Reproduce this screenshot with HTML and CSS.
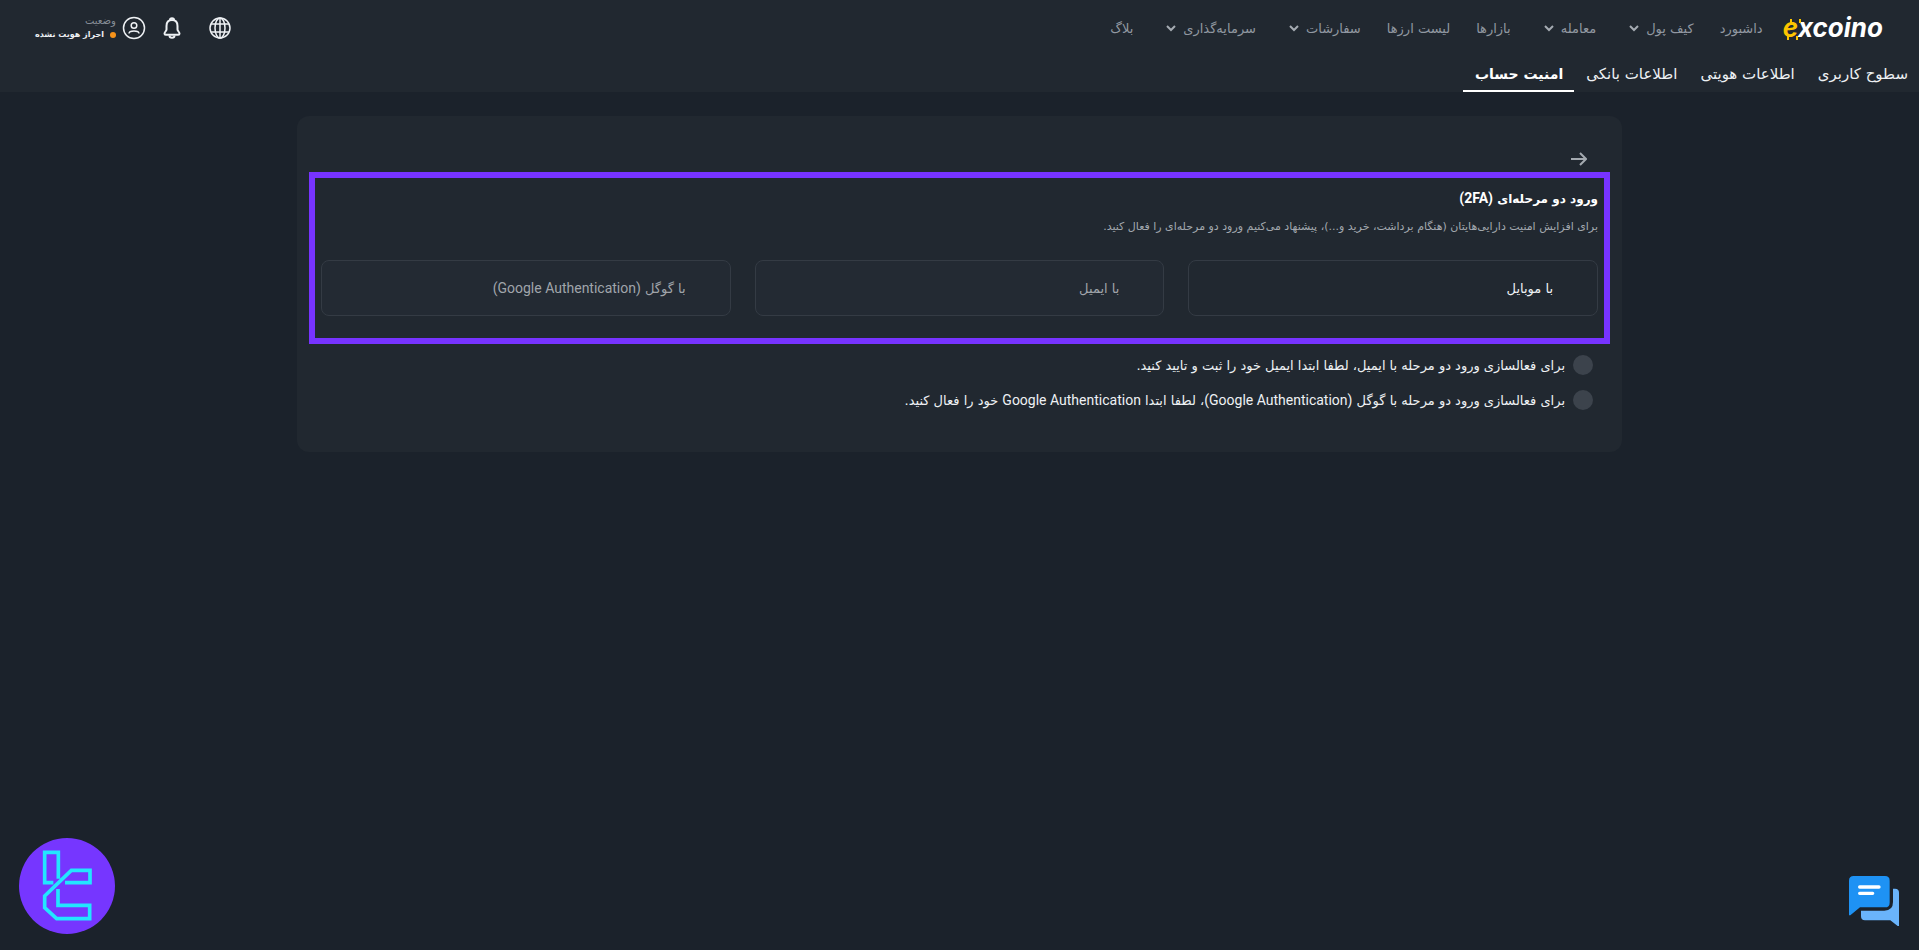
FILE: index.html
```html
<!DOCTYPE html>
<html lang="fa" dir="rtl">
<head>
<meta charset="utf-8">
<meta name="viewport" content="width=device-width, initial-scale=1">
<title>excoino</title>
<link rel="stylesheet" href="styles.css">
</head>
<body>
<header class="header">
  <div class="topbar">
    <a class="logo" href="#" dir="ltr" aria-label="excoino"><span class="logo-e">e</span><span>xcoino</span></a>
    <nav class="nav">
      <a href="#">داشبورد</a>
      <a href="#">کیف پول<svg class="chevron" viewBox="0 0 10 10"><path d="M1 3l4 4 4-4"/></svg></a>
      <a href="#">معامله<svg class="chevron" viewBox="0 0 10 10"><path d="M1 3l4 4 4-4"/></svg></a>
      <a href="#">بازارها</a>
      <a href="#">لیست ارزها</a>
      <a href="#">سفارشات<svg class="chevron" viewBox="0 0 10 10"><path d="M1 3l4 4 4-4"/></svg></a>
      <a href="#">سرمایه‌گذاری<svg class="chevron" viewBox="0 0 10 10"><path d="M1 3l4 4 4-4"/></svg></a>
      <a href="#">بلاگ</a>
    </nav>
    <div class="tools">
      <button class="icon-button globe" aria-label="زبان"><svg viewBox="0 0 24 24"><circle cx="12" cy="12" r="10"/><ellipse cx="12" cy="12" rx="5" ry="10"/><path d="M12 2v20M3 8h18M3 16h18"/></svg></button>
      <button class="icon-button bell" aria-label="اعلان‌ها"><svg viewBox="0 0 24 24"><path class="heavy" d="M12 4c-4 0-5.500 3-5.500 6v3.500c0 1.500-2 2.500-2 4 0 .8.500 1.300 1.300 1.300h12.400c.8 0 1.300-.5 1.300-1.300 0-1.500-2-2.500-2-4V10c0-3-1.500-6-5.500-6z"/><path class="heavy" d="M10 4c0-2.500 4-2.500 4 0M9.500 19.500c0 3 5 3 5 0"/></svg></button>
      <a class="account" href="#">
        <svg viewBox="0 0 24 24"><circle cx="12" cy="12" r="10.500"/><circle cx="12" cy="9.500" r="2.800"/><path d="M7 17.500c0-3.500 10-3.500 10 0"/></svg>
        <span class="status">
          <span class="status-label">وضعیت</span>
          <span class="status-value"><i class="dot"></i>احراز هویت نشده</span>
        </span>
      </a>
    </div>
  </div>
  <nav class="tabs">
    <a href="#">سطوح کاربری</a>
    <a href="#">اطلاعات هویتی</a>
    <a href="#">اطلاعات بانکی</a>
    <a class="active" href="#">امنیت حساب</a>
  </nav>
</header>

<main class="card">
  <button class="back" aria-label="بازگشت"><svg viewBox="0 0 16 14"><path d="M0 7h15M9 1l6 6-6 6"/></svg></button>
  <section class="two-factor">
    <h1>ورود دو مرحله‌ای <span class="latin">(2FA)</span></h1>
    <p>برای افزایش امنیت دارایی‌هایتان (هنگام برداشت، خرید و...)، پیشنهاد می‌کنیم ورود دو مرحله‌ای را فعال کنید.</p>
    <div class="methods">
      <button class="method selected">با موبایل</button>
      <button class="method">با ایمیل</button>
      <button class="method">با گوگل <span class="latin">(Google Authentication)</span></button>
    </div>
  </section>
  <ul class="notes">
    <li><span>برای فعالسازی ورود دو مرحله با ایمیل، لطفا ابتدا ایمیل خود را ثبت و تایید کنید.</span></li>
    <li><span>برای فعالسازی ورود دو مرحله با گوگل <span class="latin">(Google Authentication)</span>، لطفا ابتدا <span class="latin">Google Authentication</span> خود را فعال کنید.</span></li>
  </ul>
</main>

<svg class="brand-badge" viewBox="0 0 288 288">
  <circle cx="144" cy="144" r="144" fill="#7636ff"/>
  <path d="M118 122V43H77v91h26M138 134h75V97h-56L77 174v35l36 33h99v-40h-95v-49" fill="none" stroke="#22e6ff" stroke-width="11"/>
</svg>
<button class="chat" aria-label="گفتگو"><svg viewBox="0 0 150 150">
  <path d="M132 38h6q12 0 12 12v100h-4l-22-17H48q-12 0-12-12v-17h70q26 0 26-26z" fill="#6ab4fb"/>
  <path d="M14 0h94q14 0 14 14v66q0 14-14 14H33L4 118H0V14Q0 0 14 0z" fill="#1e92f4"/>
  <path d="M32 33h58M32 52h39" stroke="#fff" stroke-width="10" stroke-linecap="round"/>
</svg></button>
</body>
</html>
```
FILE: styles.css
```css
* { box-sizing: border-box; }
body {
  margin: 0;
  min-height: 100vh;
  background: #1b222b;
  color: #eef1f4;
  font-family: "DejaVu Sans", Roboto, sans-serif;
  font-size: 13px;
}
a { color: inherit; text-decoration: none; }
button { font: inherit; color: inherit; background: none; border: 0; padding: 0; cursor: pointer; }
svg { display: block; }
.latin { font-family: Roboto, sans-serif; font-size: 14px; }

.header { background: #212830; }
.topbar { display: flex; align-items: center; height: 56px; padding: 0 36px 0 35px; }
.logo {
  font-family: Inter, sans-serif;
  font-size: 26px;
  line-height: 32px;
  font-style: italic;
  font-weight: 700;
  color: #fff;
}
.logo-e { position: relative; color: #fdc500; }
.logo-e::before, .logo-e::after {
  content: "";
  position: absolute;
  width: 7px;
  height: 4px;
  border: solid #fdc500;
  border-width: 0 2px;
}
.logo-e::before { top: 7px; left: 7px; }
.logo-e::after { bottom: 3px; left: 4px; }
.nav { display: flex; gap: 26px; margin-right: 20px; color: #9198a1; }
.nav a { display: flex; align-items: center; white-space: nowrap; }
.chevron { width: 10px; height: 10px; margin: 0 7px; fill: none; stroke: #a5abb2; stroke-width: 2; }
.tools { display: flex; align-items: center; margin-right: auto; }
.icon-button svg, .account > svg { width: 24px; height: 24px; fill: none; stroke: #eef1f4; stroke-width: 1.5; }
.globe { margin-left: 24px; }
.bell { margin-left: 14px; }
.account { display: flex; align-items: center; gap: 6px; }
.icon-button .heavy { stroke-width: 2; }
.status { display: flex; flex-direction: column; font-size: 8px; line-height: 14px; }
.status-label { font-size: 10px; color: #868d95; }
.status-value { display: flex; align-items: center; gap: 6px; font-weight: 700; }
.dot { width: 6px; height: 6px; border-radius: 50%; background: #f7931a; }

.tabs { display: flex; height: 36px; font-size: 15px; }
.tabs a { display: flex; align-items: center; padding: 2px 11px 0 12px; border-bottom: 2px solid transparent; }
.tabs .active { border-color: #fff; color: #fff; font-size: 14px; font-weight: 700; }

.card {
  max-width: 1325px;
  margin: 24px auto 0;
  padding: 34px 12px 40px;
  background: #212830;
  border-radius: 12px;
}
.back { display: block; margin: 0 23px 6px 0; }
.back svg { width: 16px; height: 14px; margin-top: 2px; fill: none; stroke: #a3a9af; stroke-width: 2; }
.two-factor { padding: 8px 6px 22px; border: 6px solid #7733ff; }
.two-factor h1 { margin: 0 0 4px; font-size: 12px; line-height: 24px; font-weight: 700; color: #fff; }
.two-factor p { margin: 0 0 21px; font-size: 11px; line-height: 24px; color: #a3a9af; }
.methods { display: grid; grid-template-columns: repeat(3, 1fr); gap: 24px; }
.method {
  height: 56px;
  padding: 0 44px;
  border: 1px solid #343b44;
  border-radius: 8px;
  background: #232a33;
  color: #a0a5ab;
  text-align: right;
}
.method.selected { background: #212830; color: #eef1f4; }
.notes { display: flex; flex-direction: column; gap: 11px; margin: 9px 17px 0; padding: 0; list-style: none; }
.notes li { display: flex; align-items: center; gap: 8px; min-height: 24px; }
.notes li::before { content: ""; flex: none; width: 20px; height: 20px; border-radius: 50%; background: #3c434c; }

.brand-badge { position: fixed; left: 19px; bottom: 16px; width: 96px; height: 96px; }
.chat { position: fixed; right: 20px; bottom: 24px; }
.chat svg { width: 50px; height: 50px; }
```
